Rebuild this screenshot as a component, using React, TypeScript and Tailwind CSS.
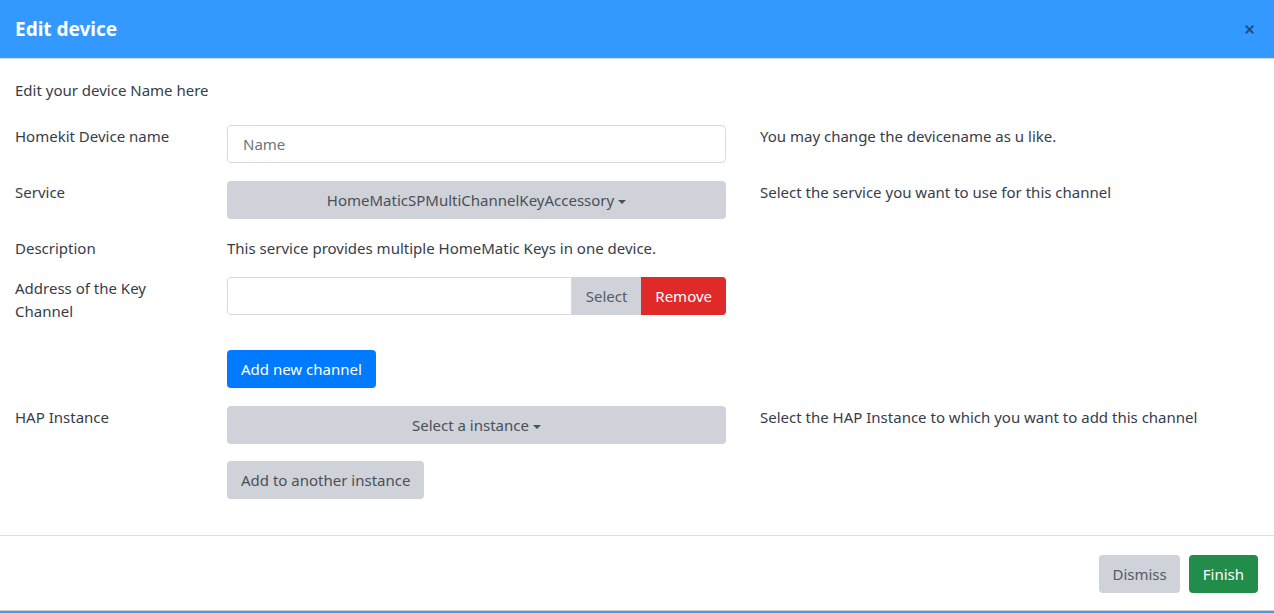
import { X } from 'lucide-react'

const font = { fontFamily: '"Noto Sans", "Open Sans", sans-serif' }

function Caret() {
  return <span className="ml-1 inline-block h-0 w-0 border-x-[4px] border-t-[4px] border-x-transparent border-t-[#495057] align-middle" />
}

function Row({ label, children, help }: { label: React.ReactNode; children: React.ReactNode; help?: string }) {
  return (
    <div className="flex items-start">
      <div className="w-[172px] leading-[23px] mr-[40px]">{label}</div>
      <div className="w-[499px]">{children}</div>
      {help && <div className="ml-[34px] leading-[23px]">{help}</div>}
    </div>
  )
}

export default function App() {
  return (
    <div className="w-[1274px] h-[613px] bg-white text-[15px] text-[#363d48] flex flex-col" style={font}>
      {/* Header */}
      <div className="h-[59px] bg-[#3399ff] border-b border-[#d6dde4] flex items-center justify-between pl-[15px] pr-[18px]">
        <h1 className="text-[19px] font-bold text-white">Edit device</h1>
        <X className="w-[13px] h-[13px] text-[#1f4f80]" strokeWidth={3.5} />
      </div>

      {/* Body */}
      <div className="flex-1 px-[15px] pt-[20px]">
        <p className="leading-[23px] mb-[23px]">Edit your device Name here</p>

        <div className="flex flex-col">
          <Row label="Homekit Device name" help="You may change the devicename as u like.">
            <input
              placeholder="Name"
              className="w-full h-[38px] px-[15px] rounded border border-[#d6d9de] placeholder-[#6c757d] outline-none"
            />
          </Row>

          <div className="mt-[18px]">
            <Row label="Service" help="Select the service you want to use for this channel">
              <button className="w-full h-[38px] rounded bg-[#cfd2d9] text-[#495057]">
                HomeMaticSPMultiChannelKeyAccessory<Caret />
              </button>
            </Row>
          </div>

          <div className="mt-[18px]">
            <Row label="Description">
              <div className="leading-[23px]">This service provides multiple HomeMatic Keys in one device.</div>
            </Row>
          </div>

          <div className="mt-[17px]">
            <Row label="Address of the Key Channel">
              <div className="flex h-[38px]">
                <input className="flex-1 min-w-0 rounded-l border border-[#d6d9de] outline-none" />
                <button className="px-[14px] bg-[#cfd2d9] text-[#555d66]">Select</button>
                <button className="px-[14px] bg-[#e02a2a] text-white rounded-r">Remove</button>
              </div>
            </Row>
          </div>

          <div className="ml-[212px] mt-[27px]">
            <button className="h-[38px] px-[14px] rounded bg-[#007bff] text-white">Add new channel</button>
          </div>

          <div className="mt-[18px]">
            <Row label="HAP Instance" help="Select the HAP Instance to which you want to add this channel">
              <button className="w-full h-[38px] rounded bg-[#cfd2d9] text-[#495057]">
                Select a instance<Caret />
              </button>
            </Row>
          </div>

          <div className="ml-[212px] mt-[17px]">
            <button className="h-[38px] px-[14px] rounded bg-[#cfd2d9] text-[#495057]">Add to another instance</button>
          </div>
        </div>
      </div>

      {/* Footer */}
      <div className="h-[75px] border-t border-[#dcdfe3] flex items-center justify-end gap-[9px] pr-[16px] pt-[2px]">
        <button className="h-[38px] px-[13px] rounded bg-[#cfd2d9] text-[#555d66]">Dismiss</button>
        <button className="h-[38px] px-[14px] rounded bg-[#228c4a] text-white">Finish</button>
      </div>
      <div className="h-[1px] bg-[#c9ccd0]" />
      <div className="h-[2px] bg-[#4a97e6]" />
    </div>
  )
}
